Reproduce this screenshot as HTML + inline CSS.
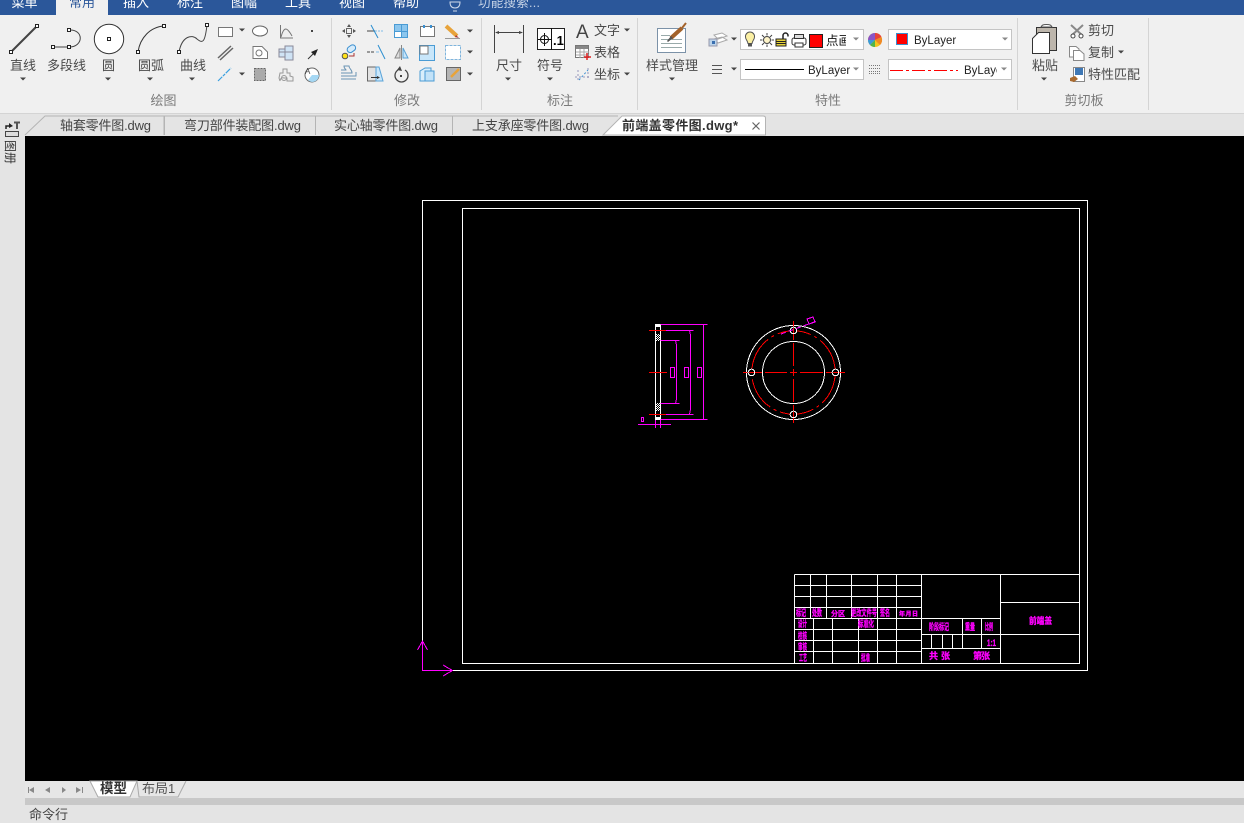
<!DOCTYPE html>
<html lang="zh">
<head>
<meta charset="utf-8">
<title>CAD</title>
<style>
html,body{margin:0;padding:0;background:#000;width:1244px;height:823px;overflow:hidden}
svg{display:block;position:absolute;left:0;top:0}
text{font-family:"Liberation Sans","Noto Sans CJK SC",sans-serif}
.l{font-size:13px;fill:#4a4a4a}
.m{font-size:13px;fill:#4a4a4a;text-anchor:middle}
.g{font-size:13px;fill:#7a7a7a;text-anchor:middle}
.t{font-size:13px;fill:#fff;text-anchor:middle}
.tb{font-size:13px;fill:#444}
.p{font-size:9px;fill:#f0f;font-weight:bold;stroke:#f0f;stroke-width:.35}
.w{fill:none;stroke:#fff;stroke-width:1;shape-rendering:crispEdges}
.mg{fill:none;stroke:#f0f;stroke-width:1;shape-rendering:crispEdges}
.r{fill:none;stroke:#f00;stroke-width:1;shape-rendering:crispEdges}
.i{fill:none;stroke:#555;stroke-width:1}
</style>
</head>
<body>
<svg width="1244" height="823" viewBox="0 0 1244 823" xmlns="http://www.w3.org/2000/svg">
<defs>
<polygon id="d" points="-3,-1.5 3,-1.5 0,1.5" fill="#444"/>
<polygon id="dg" points="-3,-1.5 3,-1.5 0,1.5" fill="#888"/>
<clipPath id="c1"><rect x="826" y="28" width="20" height="22"/></clipPath>
<clipPath id="c2"><rect x="890" y="60" width="107" height="20"/></clipPath>
<clipPath id="ctop"><rect x="0" y="0" width="1244" height="15"/></clipPath>
<pattern id="chk" width="2" height="2" patternUnits="userSpaceOnUse">
<rect width="2" height="2" fill="#000"/><rect width="1" height="1" fill="#fff"/><rect x="1" y="1" width="1" height="1" fill="#fff"/>
</pattern>
</defs>

<!-- backgrounds -->
<rect width="1244" height="823" fill="#e4e4e4"/>
<rect x="0" y="15" width="1244" height="98" fill="#f0f0f0"/>
<rect x="0" y="113" width="1244" height="1" fill="#d4d4d4"/>
<rect x="25" y="136" width="1219" height="645" fill="#000"/>

<!-- top bar -->
<rect width="1244" height="15" fill="#2b579a"/>
<rect x="56" y="0" width="52" height="16" fill="#f0f0f0"/>
<g clip-path="url(#ctop)">
<text class="t" x="24.5" y="7">菜单</text>
<text class="m" x="82" y="7" style="fill:#2b579a">常用</text>
<text class="t" x="136" y="7">插入</text>
<text class="t" x="190" y="7">标注</text>
<text class="t" x="244" y="7">图幅</text>
<text class="t" x="298" y="7">工具</text>
<text class="t" x="352" y="7">视图</text>
<text class="t" x="406" y="7">帮助</text>
<path d="M455 8c-4 0-5-3-5-6h10c0 3-1 6-5 6zM453 11h4" fill="none" stroke="#cfd9ea" stroke-width="1"/>
<text x="478" y="7" textLength="62" style="font-size:12.5px;fill:#c5d2e6">功能搜索...</text>
</g>

<!-- separators -->
<g fill="#d4d4d4">
<rect x="331" y="18" width="1" height="92"/>
<rect x="481" y="18" width="1" height="92"/>
<rect x="637" y="18" width="1" height="92"/>
<rect x="1017" y="18" width="1" height="92"/>
<rect x="1148" y="18" width="1" height="92"/>
</g>

<!-- Draw group -->
<g>
<path d="M11 52L37 26" stroke="#444" stroke-width="2" fill="none"/>
<path d="M53 47H69" stroke="#444" fill="none"/>
<path d="M69 30C84 29 84 47 69 47" stroke="#444" fill="none"/>
<circle cx="109" cy="39" r="14.7" fill="#fff" stroke="#333"/>
<path d="M138 52C140 38 150 27 164 26" stroke="#333" fill="none"/>
<path d="M179 52C182 36 192 34 197 39C203 44 205 42 207 25" stroke="#444" fill="none"/>
<g fill="#fff" stroke="#222" shape-rendering="crispEdges">
<rect x="9.5" y="50.5" width="3" height="3"/><rect x="35.5" y="24.5" width="3" height="3"/>
<rect x="51.5" y="45.5" width="3" height="3"/><rect x="67.5" y="45.5" width="3" height="3"/><rect x="67.5" y="28.5" width="3" height="3"/>
<rect x="107.5" y="37.5" width="3" height="3"/>
<rect x="136.5" y="50.5" width="3" height="3"/><rect x="162.5" y="24.5" width="3" height="3"/>
<rect x="177.5" y="50.5" width="3" height="3"/><rect x="205.5" y="23.5" width="3" height="3"/>
</g>
<text class="m" x="23" y="70">直线</text>
<text class="m" x="66.5" y="70">多段线</text>
<text class="m" x="108.5" y="70">圆</text>
<text class="m" x="151" y="70">圆弧</text>
<text class="m" x="193" y="70">曲线</text>
<use href="#d" x="23" y="79"/><use href="#d" x="108" y="79"/><use href="#d" x="150" y="79"/><use href="#d" x="192" y="79"/>

<rect x="218.5" y="27.5" width="14" height="9" fill="#fff" stroke="#777"/>
<use href="#d" x="242" y="30"/>
<ellipse cx="260" cy="31" rx="7.5" ry="5" fill="#fff" stroke="#666"/>
<path d="M280.5 25V38H293M281 37C284 26 287 27 292 36" class="i" style="stroke:#777"/>
<rect x="311" y="30" width="2" height="2" fill="#444"/>
<path d="M218 58L231 46M220 60L233 48" stroke="#666" stroke-width="1.5" fill="none"/>
<path d="M253 46.5H262L267.5 52V58.500H253Z" fill="#fff" stroke="#777"/>
<circle cx="259" cy="53" r="3" fill="none" stroke="#777"/>
<rect x="279" y="49" width="9" height="8" fill="#cfe3f5" stroke="#889"/>
<rect x="285" y="46" width="8" height="14" fill="#cfe3f5" stroke="#889"/>
<path d="M279 52H293" stroke="#889"/>
<path d="M308 59L315 52" stroke="#333"/><polygon points="318,49 311,52 315,56" fill="#222"/>
<path d="M218 81L231 68" stroke="#3aa0e0" stroke-width="1.2" stroke-dasharray="6 1 3 1" fill="none"/>
<use href="#d" x="242" y="74"/>
<rect x="254.5" y="68.5" width="11" height="12" fill="#aaa" stroke="#666" stroke-dasharray="2 1"/>
<path d="M280 73h3v-4h4v4h3v3l3 1v4h-6v-3h-3a3 3 0 0 0-4 3l-1-3z" fill="#eee" stroke="#999"/>
<circle cx="284" cy="78" r="2.5" fill="none" stroke="#999"/>
<circle cx="312" cy="75" r="7" fill="#fff" stroke="#666"/>
<path d="M312 75h7a7 7 0 0 1-7 7a7 7 0 0 1-4-2z" fill="#a6d8f4"/>
<text x="305" y="74" style="font-size:8px;fill:#444">A</text>
<text class="g" x="163.5" y="105">绘图</text>
</g>

<!-- Modify group -->
<g>
<g fill="#555">
<rect x="346.5" y="28.5" width="5" height="5" fill="none" stroke="#666"/>
<polygon points="349,24 347,27 351,27"/><polygon points="349,38 347,35 351,35"/>
<polygon points="342,31 345,29 345,33"/><polygon points="356,31 353,29 353,33"/>
</g>
<path d="M367 31H375" stroke="#444"/><path d="M375 31H384" stroke="#7fbde8" stroke-dasharray="2 1"/><path d="M371 25L378 38" stroke="#2b8ed0"/>
<g shape-rendering="crispEdges">
<rect x="394.5" y="24.5" width="13" height="13" fill="#fff" stroke="#4a9bd4"/>
<rect x="395" y="25" width="6" height="6" fill="#8cc6ee"/><rect x="402" y="25" width="5" height="6" fill="#8cc6ee"/><rect x="402" y="32" width="5" height="5" fill="#8cc6ee"/>
<path d="M401.5 24V38M394 31.5H408" stroke="#4a9bd4"/>
<rect x="420.5" y="26.5" width="14" height="10" fill="#fff" stroke="#777"/>
<rect x="423" y="25" width="2" height="3" fill="#3a8fd0"/><rect x="430" y="25" width="2" height="3" fill="#3a8fd0"/>
</g>
<path d="M446 26L457 36" stroke="#e8a33a" stroke-width="4"/><path d="M456 35l3 3-4-1z" fill="#a33"/><path d="M445 38.5H460" stroke="#999"/>
<use href="#d" x="470" y="31"/>

<circle cx="345" cy="56" r="2.8" fill="#ffe21a" stroke="#555"/>
<rect x="347" y="46" width="9" height="6" rx="3" transform="rotate(-35 351 49)" fill="#d6ebfa" stroke="#3a8fd0"/>
<path d="M349 56h5v-3" stroke="#a33" fill="none"/>
<path d="M367 52H374" stroke="#444" stroke-dasharray="3 1"/><path d="M376 52h3" stroke="#7fbde8"/><path d="M378 45L385 59" stroke="#2b8ed0"/>
<path d="M401.5 45V60" stroke="#888"/><polygon points="400,48 400,58 395,58" fill="#ddd" stroke="#888"/><polygon points="403,48 403,58 408,58" fill="#c8e4f8" stroke="#5aa3d8"/>
<g shape-rendering="crispEdges">
<rect x="419.5" y="45.5" width="15" height="15" fill="#c8e6fa" stroke="#4a9bd4"/>
<rect x="420" y="46" width="8" height="8" fill="#fff" stroke="#777"/>
<rect x="445.5" y="45.5" width="15" height="14" fill="#fff" stroke="#7fb4dc" stroke-dasharray="3 1"/>
</g>
<use href="#d" x="470" y="52"/>

<path d="M341 73H352C352 69 349 69 349 66H344C344 69 346 69 346 70H341M341 76H356V72M341 79H356" class="i" style="stroke:#6a93b3"/>
<path d="M367.5 67H376V81H367.5Z" fill="#e2e2e2" stroke="#666"/>
<path d="M376 67H379L383 81H376Z" fill="#c8e6fa" stroke="#5aa3d8"/>
<path d="M371 77.5H378" stroke="#333"/><polygon points="380,77.5 377,76 377,79" fill="#333"/>
<path d="M398 70A6.5 6.5 0 1 0 405 70" fill="none" stroke="#444" stroke-width="1.3"/>
<polygon points="400,66 397,70 402,71" fill="#444"/><rect x="400" y="75" width="2" height="2" fill="#444"/>
<path d="M420 71L425 68H431V79L427 81H420Z" fill="#d9eefb" stroke="#4a9bd4"/>
<path d="M425 71H434V81H425Z" fill="#c2e2f8" stroke="#4a9bd4"/>
<rect x="446.5" y="67.5" width="14" height="13" fill="#b4b4b4" stroke="#666"/>
<path d="M451 77L459 69" stroke="#e8a33a" stroke-width="2.5"/>
<use href="#d" x="470" y="74"/>
<text class="g" x="407" y="105">修改</text>
</g>

<!-- Annotate -->
<g>
<path d="M494.5 25V53M523.5 25V53M496 32.5H522" stroke="#444" fill="none"/>
<polygon points="495,32.5 499,31 499,34" fill="#444"/><polygon points="523,32.5 519,31 519,34" fill="#444"/>
<text class="m" x="509" y="70">尺寸</text><use href="#d" x="508" y="79"/>
<rect x="537.5" y="28.5" width="27" height="21" fill="#fff" stroke="#222"/>
<path d="M551.5 28V50M538 39.5H551M544.5 33V46" stroke="#111"/>
<circle cx="544.5" cy="39.5" r="4" fill="none" stroke="#111"/>
<text x="553" y="45" style="font-size:13px;font-weight:bold;fill:#000">.1</text>
<text class="m" x="550" y="70">符号</text><use href="#d" x="550" y="79"/>
<text x="576" y="38" style="font-size:19px;fill:#444">A</text>
<text class="l" x="594" y="35">文字</text><use href="#d" x="627" y="30"/>
<rect x="575.5" y="45.5" width="13" height="12" fill="#fff" stroke="#777"/>
<rect x="576" y="46" width="12" height="3" fill="#888"/>
<path d="M580 49V58M584 49V58M576 52H589M576 55H589" stroke="#aaa"/>
<path d="M587 53V60M584 57H591" stroke="#d22" stroke-width="1.5"/>
<text class="l" x="594" y="57">表格</text>
<path d="M578 70v10M588 68v12M575 77h16" stroke="#99b" stroke-dasharray="2 2" fill="none"/>
<path d="M579 80L588 70" stroke="#3a8fd0" stroke-dasharray="2 2"/>
<text class="l" x="594" y="79">坐标</text><use href="#d" x="627" y="74"/>
<text class="g" x="560" y="105">标注</text>
</g>

<!-- Style manager -->
<g>
<rect x="657.5" y="28.5" width="28" height="24" fill="#fff" stroke="#7c92a8"/>
<path d="M661 35.5H670M661 39.5H682M661 43.5H682M661 47.5H682" stroke="#9aa"/>
<path d="M671 38L682 28" stroke="#a3622a" stroke-width="4"/><path d="M682 28L686 23" stroke="#a3622a" stroke-width="2"/>
<path d="M667 41l4-5 2 2-5 4z" fill="#555"/>
<text class="m" x="672" y="70">样式管理</text><use href="#d" x="672" y="79"/>
</g>

<!-- Properties -->
<g>
<path d="M714 35L722 33L727 36L718 39ZM714 39L722 37L727 40L718 43Z" fill="#fff" stroke="#aaa"/>
<rect x="709" y="39" width="8" height="7" fill="#bcd4ea" stroke="#99a"/><rect x="712" y="41" width="3" height="3" fill="#3a6fb0"/>
<use href="#d" x="734" y="39"/>
<rect x="740.5" y="29.5" width="123" height="20" fill="#fff" stroke="#c4c4c4" shape-rendering="crispEdges"/>
<path d="M750 32a4.5 4.5 0 0 1 4.5 5c0 2.5-2 3.5-2.5 6.5h-4c-.5-3-2.5-4-2.5-6.5a4.5 4.5 0 0 1 4.5-5z" fill="#fbf0a4" stroke="#555"/>
<rect x="748" y="44" width="4" height="2.5" fill="#555"/>
<circle cx="767" cy="40" r="3.5" fill="#fdf3c8" stroke="#444"/>
<path d="M767 33v2.5M767 44.5v2.5M760 40h2.5M771.5 40h2.5M762 35l2 2M770 43l2 2M772 35l-2 2M764 43l-2 2" stroke="#444"/>
<rect x="776" y="39" width="10" height="7" fill="#e7d33a" stroke="#222"/><path d="M776 41.5h10M776 43.5h10" stroke="#222"/>
<path d="M783 39v-3.5a2.5 2.5 0 0 1 5 0v1" fill="none" stroke="#222" stroke-width="1.5"/>
<rect x="792" y="38" width="14" height="7" rx="2" fill="#fff" stroke="#333"/>
<rect x="794.5" y="34.5" width="9" height="4" fill="#ddd" stroke="#333"/><rect x="795" y="43" width="8" height="4" fill="#fff" stroke="#333"/>
<rect x="809.5" y="34.5" width="13" height="13" fill="#f00" stroke="#222" shape-rendering="crispEdges"/>
<text x="826" y="45" clip-path="url(#c1)" style="font-size:12.5px;fill:#111">点画</text>
<use href="#dg" x="856" y="39"/>
<circle cx="875" cy="40" r="7" fill="#f3c41d"/>
<path d="M875 40V33A7 7 0 0 1 881.5 37Z" fill="#e8413a"/><path d="M875 40L881.5 37A7 7 0 0 1 880 45Z" fill="#f08a24"/>
<path d="M875 40L870 45A7 7 0 0 0 875 47Z" fill="#4fb54a"/><path d="M875 40L868 40A7 7 0 0 0 870 45Z" fill="#3a9ad9"/>
<path d="M875 40L875 33A7 7 0 0 0 868 40Z" fill="#8a55c7"/>
<rect x="888.5" y="29.5" width="123" height="20" fill="#fff" stroke="#c4c4c4" shape-rendering="crispEdges"/>
<rect x="896.5" y="33.5" width="11" height="11" fill="#f00" stroke="#3a8fd0" shape-rendering="crispEdges"/>
<text x="914" y="44" style="font-size:11.5px;fill:#222">ByLayer</text>
<use href="#dg" x="1005" y="39"/>

<path d="M712 65.5H722M712 69.5H722M712 73.5H722" stroke="#555" fill="none" shape-rendering="crispEdges"/>
<use href="#d" x="734" y="69"/>
<rect x="740.5" y="59.5" width="123" height="20" fill="#fff" stroke="#c4c4c4" shape-rendering="crispEdges"/>
<path d="M745 69.5H804" stroke="#000" shape-rendering="crispEdges"/>
<text x="808" y="74" style="font-size:11.5px;fill:#222">ByLayer</text>
<use href="#dg" x="856" y="69"/>
<path d="M869 65.5H881M869 68.5H881M869 71.5H881M869 73.5H881" stroke="#777" stroke-dasharray="1 1" shape-rendering="crispEdges"/>
<rect x="888.5" y="59.5" width="123" height="20" fill="#fff" stroke="#c4c4c4" shape-rendering="crispEdges"/>
<path d="M890 70.5H958" stroke="#f00" stroke-dasharray="13 3 3 3" shape-rendering="crispEdges"/>
<text x="964" y="74" clip-path="url(#c2)" style="font-size:11.5px;fill:#222">ByLayer</text>
<use href="#dg" x="1004" y="69"/>
<text class="g" x="828" y="105">特性</text>
</g>

<!-- Clipboard -->
<g>
<rect x="1036.5" y="27.5" width="20" height="23" fill="#bdb6ac" stroke="#333"/>
<path d="M1041 27c1-2 2-2.5 5.5-2.5s4.5.5 5.5 2.5z" fill="#fff" stroke="#555"/>
<path d="M1032.5 38.5L1038.5 32.5H1049.5V53.5H1032.5Z" fill="#fff" stroke="#333"/>
<text class="m" x="1045" y="70">粘贴</text><use href="#d" x="1044" y="79"/>
<path d="M1071 25L1083 36M1083 25L1071 36" stroke="#888" stroke-width="2"/>
<circle cx="1073" cy="36" r="2" fill="#fff" stroke="#444"/><circle cx="1081" cy="36" r="2" fill="#fff" stroke="#444"/>
<text class="l" x="1088" y="35">剪切</text>
<path d="M1069.5 46.5H1076L1079 49V57H1069.5Z" fill="#fff" stroke="#888"/>
<path d="M1073.5 50.5H1080L1084 54V60.5H1073.5Z" fill="#fff" stroke="#888"/>
<text class="l" x="1088" y="57">复制</text><use href="#d" x="1121" y="52"/>
<rect x="1073.5" y="67.5" width="11" height="14" fill="#fff" stroke="#888"/>
<rect x="1075" y="68" width="8" height="7" fill="#3f78b5"/>
<path d="M1070 78l5-2 3 3-4 3-4-1z" fill="#a96a2e"/>
<text class="l" x="1088" y="79">特性匹配</text>
<text class="g" x="1084" y="105">剪切板</text>
</g>

<!-- document tabs -->
<g>
<path d="M25 135L45 116H164V135" fill="#e4e4e4" stroke="#b4b4b4"/>
<path d="M164.5 135V116H315.5V135" fill="none" stroke="#b4b4b4"/>
<path d="M315.5 135V116H452.5V135" fill="none" stroke="#b4b4b4"/>
<path d="M452.5 135V116H618" fill="none" stroke="#b4b4b4"/>
<path d="M603 135L622 116H763Q765.5 116 765.5 118V135Z" fill="#fff" stroke="#b4b4b4"/>
<text class="tb" x="60" y="130" textLength="91">轴套零件图.dwg</text>
<text class="tb" x="184" y="130" textLength="117">弯刀部件装配图.dwg</text>
<text class="tb" x="334" y="130" textLength="104">实心轴零件图.dwg</text>
<text class="tb" x="472" y="130" textLength="117">上支承座零件图.dwg</text>
<text class="tb" x="622" y="130" textLength="116" style="font-weight:bold;fill:#333">前端盖零件图.dwg*</text>
<path d="M752.5 122.5L759.5 129.5M759.5 122.5L752.5 129.5" stroke="#666" stroke-width="1.2"/>
</g>

<!-- left palette -->
<g>
<rect x="5.5" y="131.5" width="13" height="5" fill="#ddd" stroke="#444"/>
<path d="M6 129V126H10" stroke="#222" fill="none" stroke-width="1.5"/><polygon points="9,123 13,126 9,128" fill="#222"/>
<path d="M14 122.5H20M17 122.5V129" stroke="#555" stroke-width="2" fill="none"/>
<text transform="translate(6,140) rotate(90)" x="0" y="0" style="font-size:12px;fill:#333">图册</text>
</g>

<!-- drawing frames -->
<rect class="w" x="422.5" y="200.5" width="665" height="470"/>
<rect class="w" x="462.5" y="208.5" width="617" height="455"/>

<!-- title block -->
<g class="w">
<path d="M794.5 574.5V663.5M794.5 574.5H1079.5"/>
<path d="M794.5 585.5H921.5M794.5 596.5H921.5M794.5 607.5H921.5M794.5 618.5H1000.5M794.5 629.5H921.5M794.5 640.5H921.5M794.5 651.5H921.5"/>
<path d="M810.5 574.5V618.5M826.5 574.5V618.5M851.5 574.5V618.5M877.5 574.5V618.5M896.5 574.5V618.5"/>
<path d="M813.5 618.5V663.5M832.5 618.5V663.5M858.5 618.5V663.5M877.5 618.5V663.5M896.5 618.5V663.5"/>
<path d="M921.5 574.5V663.5M1000.5 574.5V663.5"/>
<path d="M1000.5 602.5H1079.5M921.5 634.5H1079.5M921.5 648.5H1000.5"/>
<path d="M962.5 618.5V648.5M981.5 618.5V648.5M931.5 634.5V648.5M942.5 634.5V648.5M952.5 634.5V648.5"/>
</g>
<g>
<text class="p" x="796" y="616" textLength="10" lengthAdjust="spacingAndGlyphs">标记</text>
<text class="p" x="812" y="616" textLength="10" lengthAdjust="spacingAndGlyphs">处数</text>
<text class="p" x="831" y="616" textLength="14" lengthAdjust="spacing" style="font-size:7px">分 区</text>
<text class="p" x="851" y="616" textLength="26" lengthAdjust="spacingAndGlyphs">更改文件号</text>
<text class="p" x="880" y="616" textLength="10" lengthAdjust="spacingAndGlyphs">签名</text>
<text class="p" x="899" y="616" textLength="19" lengthAdjust="spacing" style="font-size:6px">年月日</text>
<text class="p" x="798" y="627" textLength="9" lengthAdjust="spacingAndGlyphs">设计</text>
<text class="p" x="858" y="627" textLength="16" lengthAdjust="spacingAndGlyphs">标准化</text>
<text class="p" x="798" y="639" textLength="9" lengthAdjust="spacingAndGlyphs">校核</text>
<text class="p" x="798" y="650" textLength="9" lengthAdjust="spacingAndGlyphs">审核</text>
<text class="p" x="799" y="661" textLength="8" lengthAdjust="spacingAndGlyphs">工艺</text>
<text class="p" x="861" y="661" textLength="9" lengthAdjust="spacingAndGlyphs">批准</text>
<text class="p" x="929" y="630" textLength="20" lengthAdjust="spacingAndGlyphs">阶段标记</text>
<text class="p" x="965" y="630" textLength="10" lengthAdjust="spacingAndGlyphs">重量</text>
<text class="p" x="985" y="630" textLength="8" lengthAdjust="spacingAndGlyphs">比例</text>
<text class="p" x="987" y="646" textLength="9" lengthAdjust="spacingAndGlyphs">1:1</text>
<text class="p" x="929" y="659" textLength="21" lengthAdjust="spacing">共 张</text>
<text class="p" x="973" y="659" textLength="17" lengthAdjust="spacing">第 张</text>
<text class="p" x="1029" y="624" textLength="23" lengthAdjust="spacingAndGlyphs">前端盖</text>
</g>

<!-- UCS icon -->
<path d="M422.5 641V670.5H452.5M417.5 650L422.5 641L427.5 650M443 665L452.5 670.5L443 676" fill="none" stroke="#f0f" stroke-width="1" shape-rendering="crispEdges"/>

<!-- section view -->
<g>
<path class="w" d="M655.5 324.5V424.5M660.5 324.5V424.5"/>
<rect x="655" y="324" width="6" height="3" fill="#fff"/>
<rect x="655" y="417" width="6" height="3" fill="#fff"/>
<rect x="656" y="334" width="4" height="7" fill="url(#chk)"/>
<rect x="656" y="403" width="4" height="8" fill="url(#chk)"/>
<path class="mg" d="M660.5 324.5H707.5M660.5 419.5H707.5M703.5 324.5V419.5"/>
<path class="mg" d="M665 330.5H693.5M689.5 330.5L690.5 335V409L689.5 414.5M665 414.5H693.5"/>
<path class="mg" d="M660.5 340.5H679.5M675.5 340.5L676.5 345V399L675.5 403.5M660.5 403.5H679.5"/>
<path class="mg" d="M670.5 367.5h4v10h-4zM684.5 367.5h4v10h-4zM697.5 367.5h4v10h-4zM641.5 417.5h2v4h-2z"/>
<path class="mg" d="M638 424.5H671M655.5 420V428M660.5 420V428"/>
<path class="r" d="M649 330.5H666M649 414.5H666M649 372.5H667"/>
</g>

<!-- front view -->
<g shape-rendering="crispEdges">
<circle cx="793.5" cy="372.5" r="47" fill="none" stroke="#fff"/>
<circle cx="793.5" cy="372.5" r="31" fill="none" stroke="#fff"/>
<circle cx="793.5" cy="372.5" r="41.7" fill="none" stroke="#f00" stroke-dasharray="34 4 3 4"/>
<path class="r" d="M743 372.5H762M765 372.5H787M790 372.5H797M800 372.5H823M826 372.5H845"/>
<path class="r" d="M793.5 321V340M793.5 343V366M793.5 369V376M793.5 379V402M793.5 405V423"/>
<g fill="#000" stroke="#fff">
<circle cx="751.5" cy="372.5" r="3.3"/>
<circle cx="835.5" cy="372.5" r="3.3"/>
<circle cx="793.5" cy="330.5" r="3.3"/>
<circle cx="793.5" cy="414.5" r="3.3"/>
</g>
<path class="r" d="M749 372.5H754M833 372.5H838M793.5 328V333M793.5 412V417"/>
<path d="M781 334L817 321" stroke="#f0f" stroke-dasharray="5 3" fill="none"/>
<path d="M807 319L813 317L815 322L809 324Z" fill="none" stroke="#f0f"/>
</g>

<!-- bottom tabs -->
<g>
<rect x="25" y="781" width="1219" height="17" fill="#e6e6e6"/>
<rect x="25" y="798" width="1219" height="7" fill="#c8c8c8"/>
<rect x="0" y="805" width="1244" height="18" fill="#e4e4e4"/>
<polygon points="29,790 34,787 34,793" fill="#888"/><rect x="28" y="787" width="1" height="6" fill="#888"/>
<polygon points="45,790 50,787 50,793" fill="#888"/>
<polygon points="66,790 62,787 62,793" fill="#888"/>
<polygon points="81,790 76,787 76,793" fill="#888"/><rect x="82" y="787" width="1" height="6" fill="#888"/>
<path d="M90 781L98 797H130L137 781Z" fill="#fff" stroke="#aaa"/>
<path d="M137 781L139 797H178L186 781" fill="#e6e6e6" stroke="#aaa"/>
<text x="100" y="793" style="font-size:13.5px;font-weight:bold;fill:#333">模型</text>
<text x="142" y="793" style="font-size:13px;fill:#555">布局1</text>
<text x="29" y="819" style="font-size:13px;fill:#444">命令行</text>
</g>
</svg>
</body>
</html>
